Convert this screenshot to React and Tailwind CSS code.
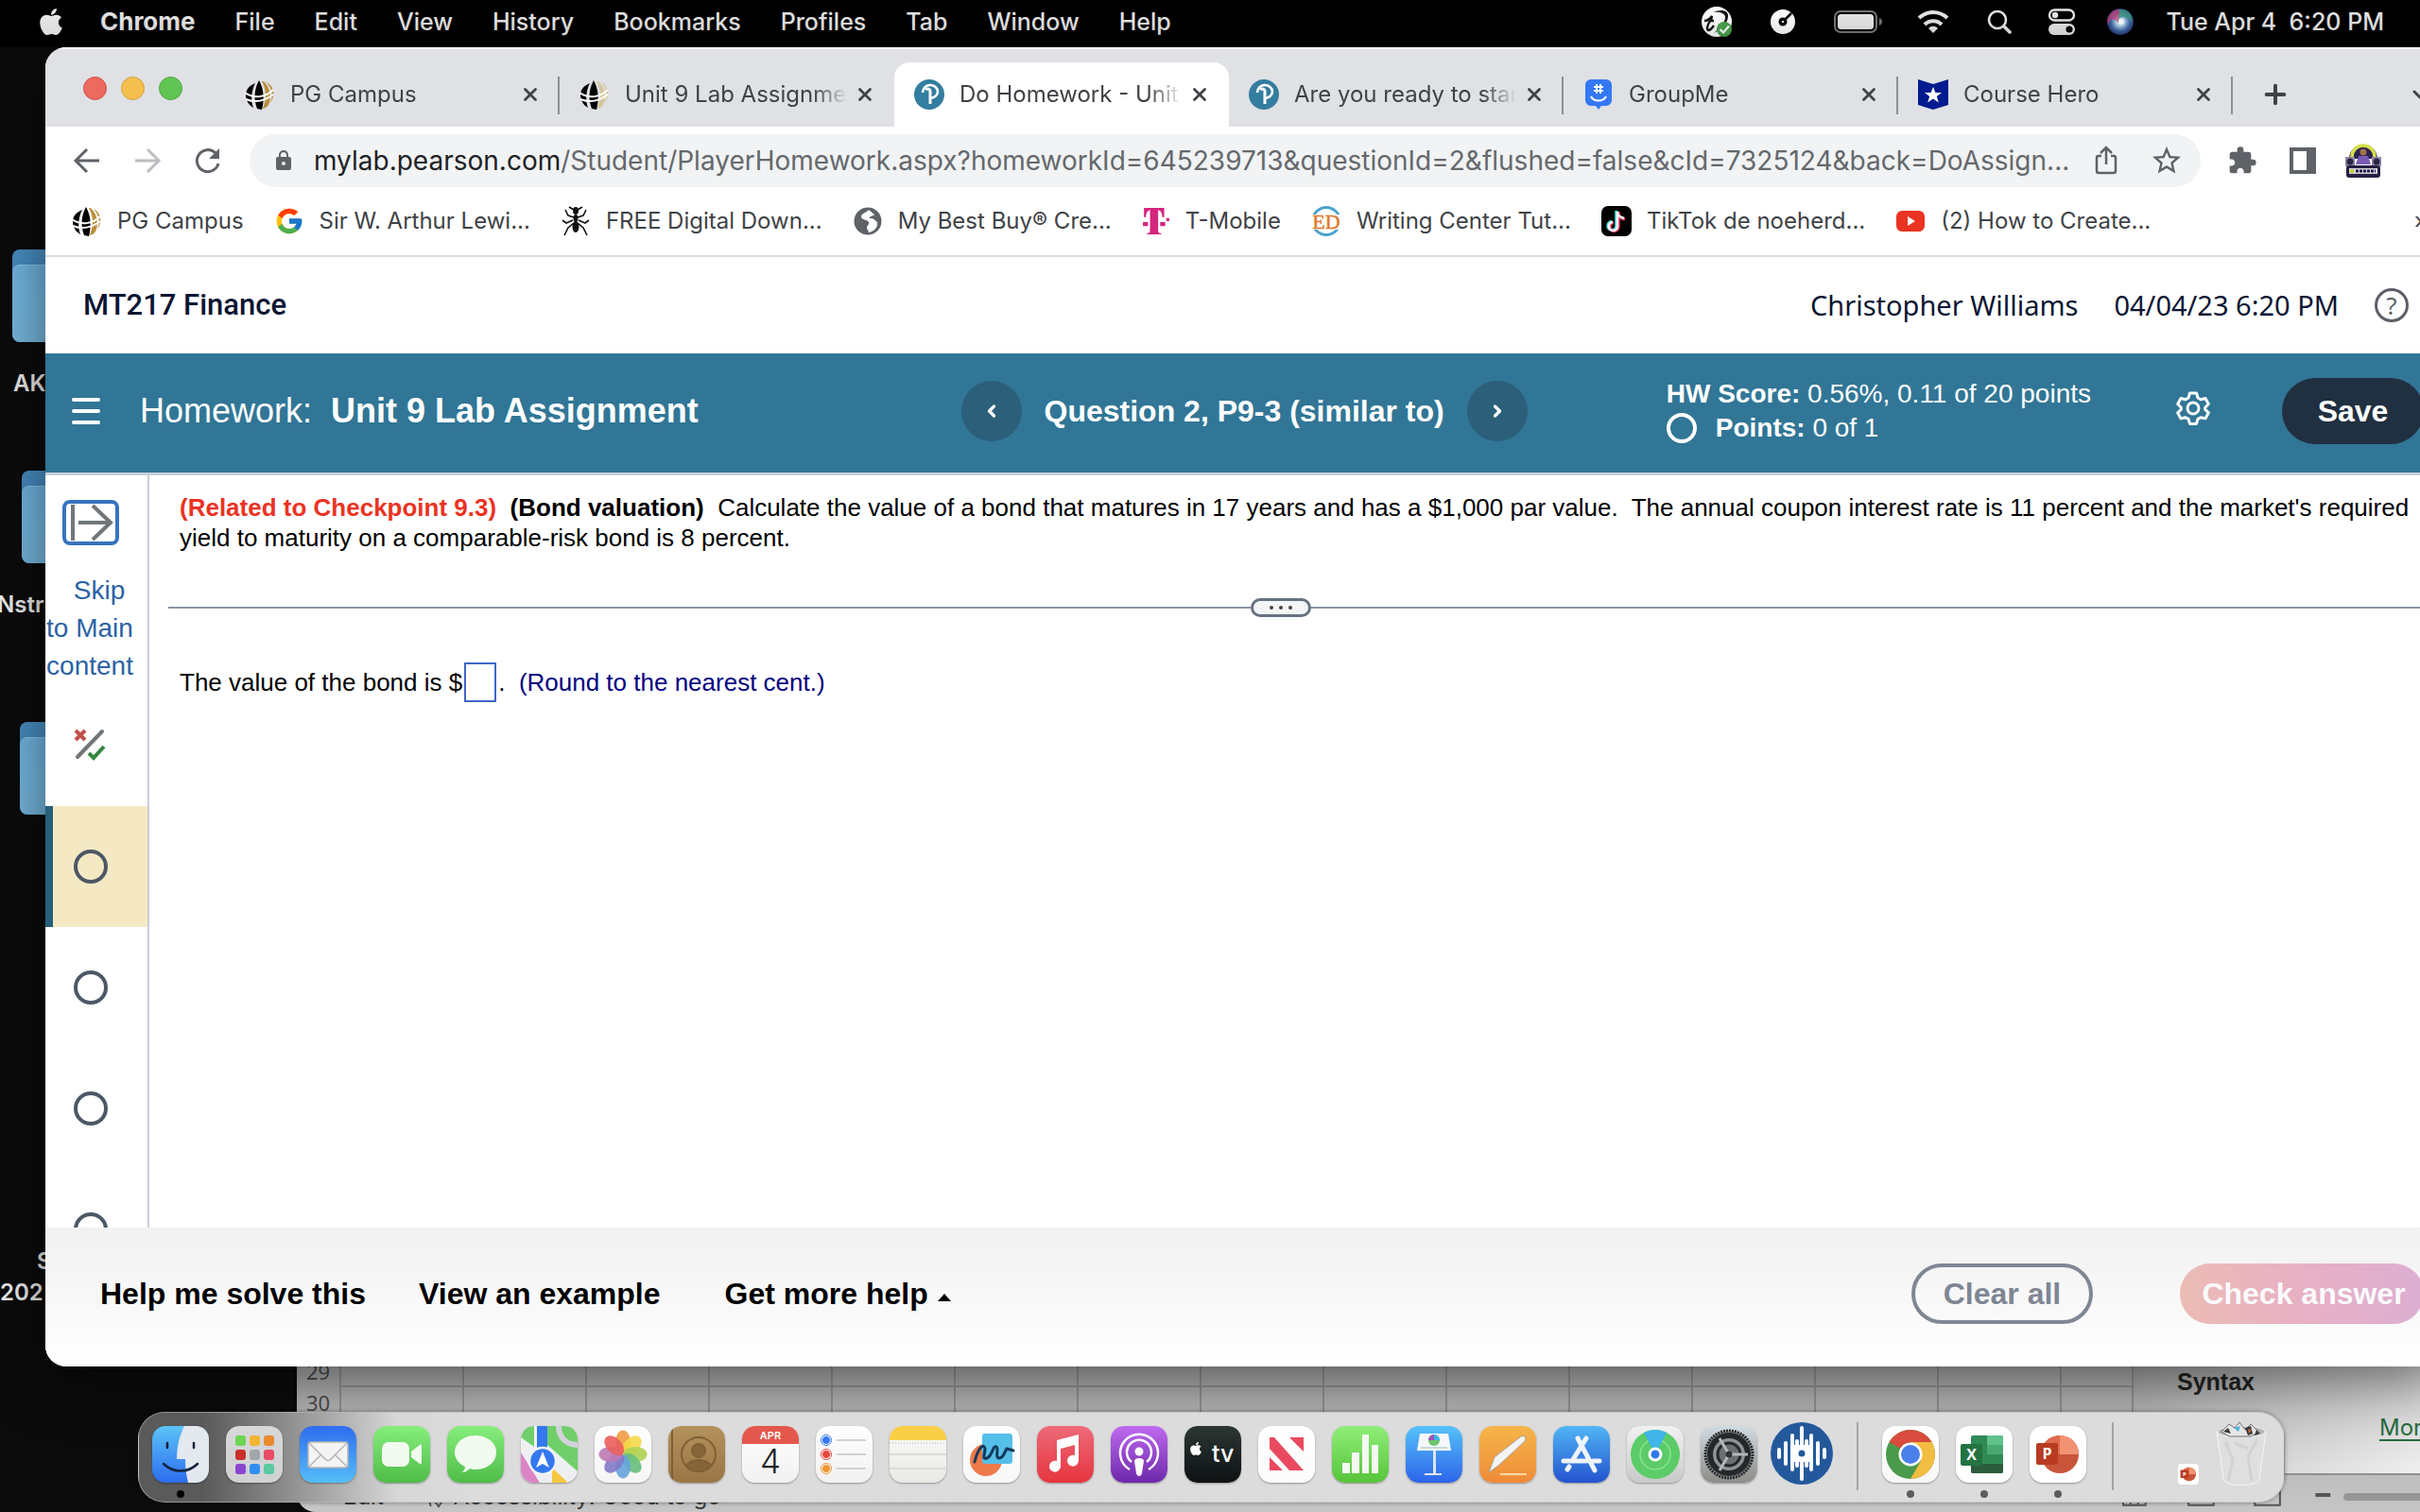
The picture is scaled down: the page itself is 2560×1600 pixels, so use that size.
import { FaApple } from "react-icons/fa";
import { FcGoogle } from "react-icons/fc";
import { MdExtension, MdLock, MdStarOutline } from "react-icons/md";
import { ChevronDown, ChevronLeft, ChevronRight, Plus, X } from "lucide-react";

const MENUS = ["File", "Edit", "View", "History", "Bookmarks", "Profiles", "Tab", "Window", "Help"];

const TABS = [
  { title: "PG Campus", icon: <CampusIcon />, divider: true },
  { title: "Unit 9 Lab Assignment", icon: <CampusIcon faded /> },
  { title: "Do Homework - Unit 9 Lab", icon: <PearsonIcon />, active: true },
  { title: "Are you ready to start", icon: <PearsonIcon />, divider: true },
  { title: "GroupMe", icon: <GroupMeIcon />, divider: true },
  { title: "Course Hero", icon: <CourseHeroIcon />, divider: true },
];

const BOOKMARKS = [
  { title: "PG Campus", icon: <CampusIcon /> },
  { title: "Sir W. Arthur Lewi...", icon: <FcGoogle className="size-8" /> },
  { title: "FREE Digital Down...", icon: <AntIcon /> },
  { title: "My Best Buy® Cre...", icon: <GlobeIcon /> },
  { title: "T-Mobile", icon: <TMobileIcon /> },
  { title: "Writing Center Tut...", icon: <WritingIcon /> },
  { title: "TikTok de noeherd...", icon: <TikTokIcon /> },
  { title: "(2) How to Create...", icon: <YouTubeIcon /> },
];

const FOLDERS = [
  { top: "top-[264px]", left: "left-[13px]" },
  { top: "top-[498px]", left: "left-[23px]" },
  { top: "top-[764px]", left: "left-[21px]" },
];

export default function App() {
  return (
    <div className="relative h-screen overflow-hidden bg-[#0b0b0b] font-['Inter','Liberation_Sans',sans-serif]">
      <DesktopFolders />
      <SpreadsheetWindow />
      <MenuBar />
      <section className="absolute top-[50px] bottom-[154px] left-12 -right-6 flex flex-col overflow-hidden rounded-[22px] bg-white shadow-[0_10px_60px_rgba(0,0,0,0.5)]">
        <TabStrip />
        <Toolbar />
        <BookmarkBar />
        <CourseHeader />
        <HomeworkBar />
        <div className="flex min-h-0 flex-1 border-t-3 border-[#c9cdd9]">
          <QuestionNav />
          <Question />
        </div>
        <ActionBar />
      </section>
      <Dock />
    </div>
  );
}

/* ---------- desktop ---------- */

function DesktopFolders() {
  return (
    <div className="text-[24px] leading-8 font-semibold text-[#e8e8e8]">
      {FOLDERS.map((f) => (
        <div key={f.top} className={`absolute ${f.top} ${f.left} h-[98px] w-28 rounded-lg bg-linear-to-b from-[#4a8fc2] to-[#2a6cae] pt-4`}>
          <div className="h-[82px] rounded-lg border-t border-[#8cc8ea] bg-linear-to-b from-[#6fb4e0] to-[#76b6dd]" />
        </div>
      ))}
      <span className="absolute top-[390px] left-[14px]">AK</span>
      <span className="absolute top-[624px] -left-[3px]">Nstr</span>
      <span className="absolute top-[1319px] left-[39px]">S</span>
      <span className="absolute top-[1352px] left-0">202</span>
    </div>
  );
}

function SpreadsheetWindow() {
  const columns = Array.from({ length: 15 });
  return (
    <section className="absolute right-0 bottom-0 left-[314px] flex h-[166px] flex-col overflow-hidden rounded-bl-[20px] bg-linear-to-b from-[#a4a4a4] to-[#c6c6c6]">
      <div className="flex min-h-0 flex-1">
        <table className="h-[66px] flex-1 table-fixed border-collapse text-[#444]">
          <tbody>
            {[29, 30].map((row) => (
              <tr key={row} className="h-[33px]">
                <th className="w-[46px] border-r-2 border-[#8d8d8d] text-center font-['Open_Sans',sans-serif] text-[22px] leading-7 font-normal">{row}</th>
                {columns.map((_, i) => (
                  <td key={i} className={`border-2 border-t-0 border-[#8d8d8d] ${i < 14 ? "w-[130px]" : ""}`} />
                ))}
              </tr>
            ))}
          </tbody>
        </table>
        <aside className="flex w-[303px] flex-col justify-between overflow-hidden border-b-2 border-[#909090] bg-linear-to-br from-[#9c9c9c] via-[#c4c4c4] to-[#f0f0f0] pt-3 pl-[46px] pb-8">
          <b className="font-['Liberation_Sans',sans-serif] text-[25px] leading-8 text-[#222]">Syntax</b>
          <a href="#more" className="ml-[214px] text-[24px] leading-8 text-[#276a3f] underline underline-offset-4">More</a>
        </aside>
      </div>
      <footer className="flex h-[39px] items-end gap-11 pl-[49px] text-[24px] leading-8 text-[#3c3c3c]">
        <span>Edit</span>
        <span className="flex items-center gap-1.5">
          <svg viewBox="0 0 24 24" className="size-6" fill="none" stroke="#555" strokeWidth="2"><path d="M6 22c-3-4 0-8 2-11M8 14l6 8 8-11" /></svg>
          Accessibility: Good to go
        </span>
        <svg viewBox="0 0 320 39" className="ml-auto h-[39px] w-[316px]" fill="none" stroke="#555" strokeWidth="2">
          <path d="M2 4v28h24V4M10 8v24M18 8v24M72 4v28h27V4M77 28h16M143 4v28h27V4" />
          <path d="M208 21h16" strokeWidth="4" />
          <path d="M242 23h90" stroke="#969696" strokeWidth="8" strokeLinecap="round" />
        </svg>
      </footer>
    </section>
  );
}

function MenuBar() {
  return (
    <header className="absolute inset-x-0 top-0 flex h-[50px] items-center bg-black pb-1 pl-[38px] pr-[38px] text-[25px] leading-8 font-medium text-[#e9e9e9]">
      <FaApple className="size-8 shrink-0" />
      <nav className="ml-9 flex items-center gap-[42px]">
        <button className="text-[26px] font-bold">Chrome</button>
        {MENUS.map((m) => (
          <button key={m}>{m}</button>
        ))}
      </nav>
      <div className="ml-auto flex items-center">
        <svg viewBox="0 0 32 32" className="size-8">
          <circle cx="16" cy="16" r="16" fill="#fff" />
          <path d="M12 6c9-4 17-2 16 5-1 8-9 14-15 17 8-7 12-12 12-17 0-4-6-6-13-5z" fill="#111" />
          <path d="M3 15c3 0 6-2 8-5l-1 5h3M9 15c-3 5-4 9-2 10 2 0 4-2 6-5" fill="none" stroke="#111" strokeWidth="2.4" />
          <circle cx="24" cy="24" r="8" fill="#4aa34f" />
          <path d="M19.500 24l3.500 3.500 6-7" fill="none" stroke="#fff" strokeWidth="2.200" />
        </svg>
        <svg viewBox="0 0 26 26" className="ml-[41px] size-[26px]">
          <circle cx="13" cy="13" r="13" fill="#fff" />
          <circle cx="13" cy="13" r="4.500" fill="#000" />
          <circle cx="13" cy="13" r="1.200" fill="#fff" />
          <path d="M14 12l8-8" stroke="#000" strokeWidth="2.500" />
        </svg>
        <svg viewBox="0 0 52 24" className="ml-[41px] h-6 w-[52px]">
          <rect x="1" y="1" width="44" height="22" rx="6" fill="none" stroke="#777" strokeWidth="2" />
          <rect x="4" y="4" width="38" height="16" rx="3.500" fill="#e9e9e9" />
          <path d="M48 8c4 2 4 6 0 8z" fill="#777" />
        </svg>
        <svg viewBox="0 0 34 26" className="ml-9 h-[26px] w-[34px]" fill="none" stroke="#e9e9e9" strokeWidth="4">
          <path d="M2 9c9-8 21-8 30 0M8 16c5-5 13-5 18 0" />
          <path d="M17 25l-5-5c3-3 7-3 10 0z" fill="#e9e9e9" stroke="none" />
        </svg>
        <svg viewBox="0 0 26 26" className="ml-10 size-[26px]" fill="none" stroke="#e9e9e9" strokeWidth="2.600" strokeLinecap="round">
          <circle cx="11" cy="11" r="9" />
          <path d="M18 18l6 6" strokeWidth="3.600" />
        </svg>
        <svg viewBox="0 0 30 28" className="ml-[38px] h-7 w-[30px]">
          <rect x="2" y="1.500" width="26" height="11" rx="5.500" fill="none" stroke="#e9e9e9" strokeWidth="2.400" />
          <circle cx="8" cy="7" r="3.200" fill="#e9e9e9" />
          <rect x="1" y="16" width="28" height="12" rx="6" fill="#e9e9e9" />
          <circle cx="23" cy="22" r="3.600" fill="#000" />
        </svg>
        <svg viewBox="0 0 28 28" className="ml-[33px] size-7">
          <defs>
            <radialGradient id="siri">
              <stop offset="0" stopColor="#fff" />
              <stop offset=".3" stopColor="#b9d8ee" />
              <stop offset=".7" stopColor="#4169ab" />
              <stop offset="1" stopColor="#2a3a6e" />
            </radialGradient>
          </defs>
          <circle cx="14" cy="14" r="14" fill="url(#siri)" />
          <path d="M12 15C6 9 2 11 1 18-2 8 6 0 14 1z" fill="#cf3f78" opacity=".7" />
          <path d="M13 1c9-1 15 6 13 14-4-6-9-8-14-4z" fill="#3b9a80" opacity=".8" />
          <circle cx="15" cy="14" r="3" fill="#fff" opacity=".9" />
        </svg>
        <time className="ml-[34px] whitespace-pre">Tue Apr 4  6:20 PM</time>
      </div>
    </header>
  );
}

/* ---------- browser chrome ---------- */

function TabStrip() {
  return (
    <div className="flex h-[84px] shrink-0 items-end border-t-2 border-white bg-[#dfe1e5]">
      <div className="flex w-[190px] shrink-0 items-center gap-[15px] self-start pt-[29px] pl-10">
        <span className="size-[25px] rounded-full border border-[#d1524a] bg-[#ec6a5e]" />
        <span className="size-[25px] rounded-full border border-[#d6a13c] bg-[#f4bf4f]" />
        <span className="size-[25px] rounded-full border border-[#51a73e] bg-[#61c554]" />
      </div>
      {TABS.map((t) => (
        <div key={t.title} className={`relative flex h-[68px] w-[354px] shrink-0 items-center pr-4 pl-[21px] ${t.active ? "rounded-t-2xl bg-white" : ""}`}>
          {t.icon}
          <span className="ml-4 min-w-0 flex-1 overflow-hidden mask-r-from-85% text-[24px] leading-8 whitespace-nowrap text-[#3f4246]">{t.title}</span>
          <button aria-label="Close tab" className="ml-1 p-1 text-[#3f4246]">
            <X className="size-[22px]" strokeWidth={3} />
          </button>
          {t.divider ? <span className="absolute top-[15px] right-0 h-10 w-0.5 bg-[#8d9095]" /> : null}
        </div>
      ))}
      <button aria-label="New tab" className="ml-[29px] flex h-[68px] items-center text-[#3f4246]">
        <Plus className="size-8" strokeWidth={3} />
      </button>
      <button aria-label="Search tabs" className="mr-3 ml-auto flex h-[68px] items-center text-[#3f4246]">
        <ChevronDown className="size-6" strokeWidth={3} />
      </button>
    </div>
  );
}

function Toolbar() {
  return (
    <div className="flex h-[72px] shrink-0 items-center text-[#5f6368]">
      <button aria-label="Back" className="ml-7">
        <ArrowIcon />
      </button>
      <button aria-label="Forward" className="ml-8 rotate-180 text-[#bcbec1]">
        <ArrowIcon />
      </button>
      <button aria-label="Reload" className="ml-8">
        <svg viewBox="0 0 32 32" className="size-8" fill="none" stroke="currentColor" strokeWidth="3">
          <path d="M27 19a11.500 11.500 0 1 1-3-11" />
          <path d="M28 3v11H17z" fill="currentColor" stroke="none" />
        </svg>
      </button>
      <div className="ml-7 flex h-14 min-w-0 flex-1 items-center rounded-full bg-[#f1f3f4] pr-[18px] pl-6">
        <MdLock className="size-6 shrink-0" />
        <a href="#address" className="ml-5 min-w-0 flex-1 overflow-hidden text-[28px] leading-9 whitespace-nowrap text-[#65686c]">
          <span className="text-[#202124]">mylab.pearson.com</span>
          /Student/PlayerHomework.aspx?homeworkId=645239713&amp;questionId=2&amp;flushed=false&amp;cId=7325124&amp;back=DoAssign...
        </a>
        <button aria-label="Share" className="mr-8 ml-2">
          <svg viewBox="0 0 28 32" className="h-8 w-7" fill="none" stroke="currentColor" strokeWidth="2.500">
            <path d="M9 11H6a2 2 0 0 0-2 2v14a2 2 0 0 0 2 2h16a2 2 0 0 0 2-2V13a2 2 0 0 0-2-2h-3M14 20V3M8 8l6-6 6 6" />
          </svg>
        </button>
        <button aria-label="Bookmark">
          <MdStarOutline className="size-9" />
        </button>
      </div>
      <button aria-label="Extensions" className="ml-7">
        <MdExtension className="size-8" />
      </button>
      <button aria-label="Side panel" className="ml-[34px]">
        <svg viewBox="0 0 28 28" className="size-7"><path d="M0 0h28v28H0zM4 4v20h14V4z" fill="currentColor" fillRule="evenodd" /></svg>
      </button>
      <button aria-label="Profile" className="mr-[65px] ml-[31px]">
        <svg viewBox="0 0 38 38" className="size-[38px]">
          <path d="M4 17a15 15 0 0 1 30 0z" fill="#2c2350" />
          <path d="M7 15a12 12 0 0 1 24 0" fill="none" stroke="#d6e04a" strokeWidth="3.500" />
          <circle cx="19" cy="10" r="3.500" fill="#a4714f" />
          <path d="M11 23l3-9h10l3 9z" fill="#7a5bb3" />
          <rect y="15" width="10" height="10" fill="#8e87a8" />
          <rect x="28" y="15" width="10" height="10" fill="#8e87a8" />
          <circle cx="5" cy="20" r="3.500" fill="#2a2442" />
          <circle cx="33" cy="20" r="3.500" fill="#2a2442" />
          <rect x="1" y="24" width="36" height="13" rx="3" fill="#261e44" />
          <rect x="4" y="27" width="30" height="6" fill="#d4d2dd" />
          <rect x="5" y="28" width="4" height="4" fill="#c3cf3a" />
          <path d="M11 30h21" stroke="#261e44" strokeWidth="3" strokeDasharray="3 1" />
        </svg>
      </button>
    </div>
  );
}

function BookmarkBar() {
  return (
    <nav className="flex h-[66px] shrink-0 items-center border-b-2 border-[#dcdcdc] pb-2 pl-7 text-[24px] leading-8 text-[#3f4246]">
      {BOOKMARKS.map((b) => (
        <a key={b.title} href="#bookmark" className="mr-8 flex shrink-0 items-center gap-4">
          {b.icon}
          {b.title}
        </a>
      ))}
      <button aria-label="More bookmarks" className="mr-4 ml-auto">»</button>
    </nav>
  );
}

/* ---------- page ---------- */

function CourseHeader() {
  return (
    <header className="flex h-[102px] shrink-0 items-center pr-9 pl-10 font-['Noto_Sans',sans-serif] text-[29px] leading-10 text-[#0b1533]">
      <h1 className="flex-1 font-['Roboto',sans-serif] text-[31px] font-medium">MT217 Finance</h1>
      <span>Christopher Williams</span>
      <time className="ml-[38px]">04/04/23 6:20 PM</time>
      <button aria-label="Help" className="ml-[38px] flex size-9 items-center justify-center rounded-full border-3 border-[#5c5f66] text-[26px] leading-8 text-[#5c5f66]">
        ?
      </button>
    </header>
  );
}

function HomeworkBar() {
  return (
    <div className="flex h-[126px] shrink-0 items-center bg-[#317696] pr-5 pb-1 pl-7 font-['Liberation_Sans',sans-serif] text-white">
      <button aria-label="Menu" className="flex w-[30px] flex-col gap-2">
        <span className="h-1 rounded bg-white" />
        <span className="h-1 rounded bg-white" />
        <span className="h-1 rounded bg-white" />
      </button>
      <h2 className="ml-[42px] flex-1 text-[36px] leading-10 whitespace-nowrap">
        Homework:&nbsp; <b>Unit 9 Lab Assignment</b>
      </h2>
      <div className="flex items-center gap-6">
        <button aria-label="Previous question" className="flex size-16 items-center justify-center rounded-full bg-[#2b5f7a]">
          <ChevronLeft className="size-5" strokeWidth={4} />
        </button>
        <b className="text-[32px] leading-10 whitespace-nowrap">Question 2, P9-3 (similar to)</b>
        <button aria-label="Next question" className="flex size-16 items-center justify-center rounded-full bg-[#2b5f7a]">
          <ChevronRight className="size-5" strokeWidth={4} />
        </button>
      </div>
      <div className="ml-[147px] text-[28px] leading-9 whitespace-nowrap">
        <p><b>HW Score:</b> 0.56%, 0.11 of 20 points</p>
        <p className="flex items-center gap-5">
          <span className="size-8 rounded-full border-4 border-white" />
          <span><b>Points:</b> 0 of 1</span>
        </p>
      </div>
      <button aria-label="Settings" className="mb-1.5 ml-[90px]">
        <svg viewBox="0 0 36 36" className="size-9" fill="none" stroke="#fff" strokeWidth="3" strokeLinejoin="round">
          <path d="M14.500 2h7l1.500 5 3 1.700 5-1.200 3.300 6-3.600 3.700v2l3.600 3.700-3.300 6-5-1.200-3 1.700-1.500 5h-7L13 29.400l-3-1.700-5 1.200-3.300-6 3.600-3.700v-2L1.700 13.500 5 7.500l5 1.200L13 7z" />
          <circle cx="18" cy="18" r="6" />
        </svg>
      </button>
      <button className="ml-[76px] h-[70px] w-[150px] rounded-full bg-[#203040] text-[32px] leading-10 font-bold">Save</button>
    </div>
  );
}

function QuestionNav() {
  return (
    <nav className="flex w-[110px] shrink-0 flex-col overflow-hidden border-r-2 border-[#c9cdd9] font-['Liberation_Sans',sans-serif]">
      <button aria-label="Expand question list" className="mt-[26px] ml-[18px] h-12 w-[60px] shrink-0 rounded-lg border-4 border-[#3573c0]">
        <svg viewBox="0 0 52 40" className="h-10 w-[52px]" fill="none" stroke="#70767a" strokeWidth="4">
          <path d="M7 1v38M13 20h33M28 2l19 18-19 18" />
        </svg>
      </button>
      <a href="#main" className="mt-7 block w-[94px] shrink-0 text-center indent-5 text-[28px] leading-10 text-[#2b62a4]">
        Skip to&nbsp;Main content
      </a>
      <svg viewBox="0 0 34 34" className="mt-[46px] ml-[30px] size-[34px] shrink-0" fill="none" strokeWidth="4">
        <path d="M2 2l10 10M12 2L2 12" stroke="#c14f49" />
        <path d="M30 3L4 30" stroke="#70767a" strokeLinecap="round" />
        <path d="M16 26l5 5 11-12" stroke="#35873f" />
      </svg>
      <div className="mt-12 flex flex-col">
        {[true, false, false, false].map((current, i) => (
          <button
            key={i}
            aria-label={`Question ${i + 2}`}
            className={`flex h-32 items-center border-l-8 pl-[22px] ${current ? "border-[#265f79] bg-[#f5e9c4]" : "border-white"}`}
          >
            <span className="size-9 rounded-full border-4 border-[#4c5866]" />
          </button>
        ))}
      </div>
    </nav>
  );
}

function Question() {
  return (
    <main id="main" className="min-w-0 flex-1 font-['Liberation_Sans',sans-serif] text-[26px] leading-8 text-black">
      <p className="mt-[18px] pr-6 pl-8">
        <b className="text-[#ea3323]">(Related to Checkpoint 9.3)</b>&nbsp; <b>(Bond valuation)</b>&nbsp; Calculate the value of a bond that matures in 17 years and has
        a $1,000 par value.&nbsp; The annual coupon interest rate is 11 percent and the market's required yield to maturity on a comparable-risk bond is 8 percent.
      </p>
      <div className="mt-12 ml-5 flex items-center">
        <span className="h-0.5 w-[1145px] shrink bg-[#8a93a5]" />
        <button aria-label="Resize panes" className="flex h-5 w-16 shrink-0 items-center justify-center gap-1.5 rounded-full border-3 border-[#667180] bg-[#f4f5f7]">
          <span className="size-1 rounded-full bg-[#444]" />
          <span className="size-1 rounded-full bg-[#444]" />
          <span className="size-1 rounded-full bg-[#444]" />
        </button>
        <span className="h-0.5 flex-1 bg-[#8a93a5]" />
      </div>
      <div className="mt-12 flex items-center pl-8">
        <label htmlFor="answer">The value of the bond is $</label>
        <input id="answer" className="mx-0.5 h-[42px] w-[34px] border-2 border-[#3f66c8] bg-white px-1" />
        <span className="whitespace-pre">.  <span className="text-[#00007f]">(Round to the nearest cent.)</span></span>
      </div>
    </main>
  );
}

function ActionBar() {
  return (
    <footer className="flex h-[147px] shrink-0 items-center bg-linear-to-b from-[#f1f1f1] to-white pr-5 pb-2 pl-[58px] font-['Liberation_Sans',sans-serif] text-[32px] leading-10 font-bold text-black">
      <button>Help me solve this</button>
      <button className="ml-14">View an example</button>
      <button className="ml-[68px] flex items-center gap-2.5">
        Get more help
        <svg viewBox="0 0 14 8" className="mt-2 h-2 w-3.5"><path d="M0 8l7-8 7 8z" /></svg>
      </button>
      <button className="ml-auto h-16 w-48 rounded-full border-4 border-[#7f8694] text-[#7f8694]">Clear all</button>
      <button className="ml-[92px] h-16 w-[258px] rounded-full bg-linear-to-r from-[#ecbcb4] via-[#e8b0c4] to-[#dcaed2] pl-1 text-[#fafafc]">
        Check answer
      </button>
    </footer>
  );
}

/* ---------- small icons ---------- */

function ArrowIcon() {
  return (
    <svg viewBox="0 0 32 32" className="size-8" fill="none" stroke="currentColor" strokeWidth="3">
      <path d="M29 16H5M16 4L4 16l12 12" />
    </svg>
  );
}

function CampusIcon({ faded = false }) {
  return (
    <svg viewBox="0 0 32 32" className="size-8 shrink-0">
      <path d="M11 4C4 7 1 11 1 17c0 5 3 10 8 13C6 22 7 12 11 4z" />
      <path d="M15 1c-5 9-6 20-2 30l5 1c3-11 2-22-3-31z" />
      <path d="M18 2c5 9 5 19 1 29 3-1 5-2 6-4 4-8 2-18-5-25zM23 3c6 7 7 14 4 22 5-7 5-17-4-22z" fill={faded ? "#d8c49a" : "#b88f3c"} />
      <path d="M0 14c10 7 22 5 30-3M1 21c10 4 20 2 29-5" fill="none" stroke="#fff" strokeWidth="2" />
    </svg>
  );
}

function PearsonIcon() {
  return (
    <svg viewBox="0 0 32 32" className="size-8 shrink-0">
      <circle cx="16" cy="16" r="16" fill="#337d9f" />
      <path d="M9 14c0-5 4-8 8-8s8 3 8 7-4 7-9 7" fill="none" stroke="#fff" strokeWidth="2.600" />
      <path d="M12 11c2-2 5-1 5 2v13" fill="none" stroke="#fff" strokeWidth="3" />
    </svg>
  );
}

function GroupMeIcon() {
  return (
    <svg viewBox="0 0 32 32" className="size-8 shrink-0" fill="none" stroke="#fff" strokeWidth="2">
      <path d="M8 0h16a6 6 0 0 1 6 6v16a6 6 0 0 1-6 6h-5l-3 4-3-4H8a6 6 0 0 1-6-6V6a6 6 0 0 1 6-6z" fill="#3478f6" stroke="none" />
      <path d="M14 5v10M18 5v10M11 8h10M11 12h10M8 18c3 6 13 6 16 0" />
    </svg>
  );
}

function CourseHeroIcon() {
  return (
    <svg viewBox="0 0 32 32" className="size-8 shrink-0">
      <path d="M0 0l16 5 16-5v27l-16 5-16-5z" fill="#001b8f" />
      <path d="M16 8l2.400 6H25l-5.200 4 2 6.500L16 20.600 10.200 24.500l2-6.500L7 14h6.600z" fill="#fff" />
    </svg>
  );
}

function AntIcon() {
  return (
    <svg viewBox="0 0 32 32" className="size-8" fill="none" stroke="#111" strokeWidth="1.600">
      <path d="M14 4L9 1M18 4l5-3M14 12L8 10 5 4M18 12l6-2 3-6M13 15L6 18l-4-3M19 15l7 3 4-3M14 18l-6 5-4 8M18 18l6 5 4 8" />
      <ellipse cx="16" cy="5" rx="3" ry="4" fill="#111" stroke="none" />
      <ellipse cx="16" cy="13" rx="2.500" ry="4" fill="#111" stroke="none" />
      <ellipse cx="16" cy="22" rx="3.500" ry="6" fill="#111" stroke="none" />
    </svg>
  );
}

function GlobeIcon() {
  return (
    <svg viewBox="0 0 32 32" className="size-8">
      <circle cx="16" cy="16" r="14.500" fill="#5f6368" />
      <path d="M17 4c-2 3-7 3-8 7 0 4 6 3 8 6 1 3-2 3-2 6 0 2 2 3 2 5 6-1 10-6 9-11-3-2-3-4-8-4-2-2 4-2 5-4z" fill="#fff" />
    </svg>
  );
}

function TMobileIcon() {
  return (
    <svg viewBox="2 2 28 28" className="size-[30px]" fill="#d6247f">
      <path d="M4 3h20v9h-2c0-4-1-6-4-7v20c0 2 1 3 3 3v1H7v-1c2 0 3-1 3-3V5c-3 1-4 3-4 7H4zM3 17h5v4H3zM20 17h5v4h-5zM26 13h3v3h-3z" />
    </svg>
  );
}

function WritingIcon() {
  return (
    <svg viewBox="0 0 32 32" className="size-8">
      <circle cx="16" cy="16" r="14.500" fill="none" stroke="#4aa3cc" strokeWidth="3" />
      <rect y="9" width="32" height="16" fill="#fff" />
      <text x="16" y="24" textAnchor="middle" fontFamily="Liberation Serif, serif" fontSize="22" fill="#e07a2c" stroke="#e07a2c" strokeWidth=".5">ED</text>
    </svg>
  );
}

function TikTokIcon() {
  return (
    <svg viewBox="0 0 32 32" className="size-8" fill="none" strokeWidth="3.500">
      <rect width="32" height="32" rx="7" fill="#000" />
      <path d="M16 5v16a4.500 4.500 0 1 1-5-4.500M16 7c1 4 3 5 7 6" stroke="#45e6e0" />
      <path d="M18 6v16a4.500 4.500 0 1 1-5-4.500M18 8c1 4 3 5 7 6" stroke="#f0325a" />
      <path d="M17 6v15.500a4.500 4.500 0 1 1-5-4.500M17 7c1 4 3 5 7 6" stroke="#fff" strokeWidth="2.500" />
    </svg>
  );
}

function YouTubeIcon() {
  return (
    <svg viewBox="0 0 32 32" className="size-8">
      <rect x="1" y="5" width="30" height="22" rx="6" fill="#ea3323" />
      <path d="M13 11l8 5-8 5z" fill="#fff" />
    </svg>
  );
}

/* ---------- dock ---------- */

const DOCK_APPS = [
  { name: "Finder", from: "#5cc3f7", to: "#2c6df0", running: true, art: (
    <>
      <path d="M34 0h14a12 12 0 0 1 12 12v36a12 12 0 0 1-12 12H38c-2-8-3-16-3-25h-9c0-13 3-25 8-35z" fill="#e4e8ef" />
      <path d="M16 18v5M44 18v5M12 40c10 10 26 10 36 0" fill="none" stroke="#14233d" strokeWidth="2.500" strokeLinecap="round" />
    </>
  ) },
  { name: "Launchpad", from: "#d6d8da", to: "#cfd1d3", art: (
    <>
      {["#6cd553", "#f3b431", "#e98a2e", "#c9302a", "#a0a6ab", "#ea4a63", "#8c45cf", "#2f8ff0", "#5ac9a0"].map((c, i) => (
        <rect key={c} x={10 + (i % 3) * 15} y={10 + Math.floor(i / 3) * 15} width="11" height="11" rx="3" fill={c} />
      ))}
    </>
  ) },
  { name: "Mail", from: "#2f6df0", to: "#55bdf8", art: (
    <g fill="#f4f4f4" stroke="#b5b5b5" strokeWidth="1.500">
      <rect x="9" y="17" width="42" height="27" rx="3" />
      <path d="M10 43l14-14M50 43L36 29" />
      <path d="M10 18l17 17c2 2 4 2 6 0l17-17" />
    </g>
  ) },
  { name: "FaceTime", from: "#86ee7c", to: "#4fbc48", art: (
    <g fill="#f1fbef">
      <rect x="9" y="17" width="29" height="26" rx="7" />
      <path d="M40 27l9-7c1-1 2 0 2 1v18c0 1-1 2-2 1l-9-7z" />
    </g>
  ) },
  { name: "Messages", from: "#86ee7c", to: "#4fbc48", art: (
    <path d="M30 10c13 0 22 8 22 18s-9 18-22 18c-2 0-4 0-6-1-2 2-5 4-8 4 2-2 3-4 3-6-7-3-11-9-11-15 0-10 9-18 22-18z" fill="#f1fbef" />
  ) },
  { name: "Maps", from: "#f2f2f4", to: "#eceef2", art: (
    <>
      <path d="M0 28l20 32h-8A12 12 0 0 1 0 48z" fill="#dd84c7" />
      <path d="M28 0h20a12 12 0 0 1 12 12v36L28 20z" fill="#70cf6a" />
      <path d="M0 12C2 4 6 0 14 0v22z" fill="#70cf6a" />
      <path d="M33 60V44l17 16z" fill="#f5c842" />
      <path d="M40 0c0 12 8 20 20 20" fill="none" stroke="#d2d3da" strokeWidth="6" />
      <path d="M17 0h11v28H17z" fill="#3478f0" />
      <circle cx="23" cy="37" r="14" fill="#3478f0" stroke="#f0f2f6" strokeWidth="2.500" />
      <path d="M23 27l7 17-7-4-7 4z" fill="#fff" />
    </>
  ) },
  { name: "Photos", from: "#ffffff", to: "#f5f5f5", art: (
    <g opacity=".92">
      {["#f09433", "#f4d73a", "#a8cf45", "#5cba72", "#5b9ddb", "#7a6fc4", "#b86fb0", "#e9524f"].map((c, i) => (
        <ellipse key={c} cx="30" cy="17" rx="8" ry="12.500" fill={c} opacity=".9" transform={`rotate(${i * 45} 30 30)`} />
      ))}
    </g>
  ) },
  { name: "Contacts", from: "#b4925c", to: "#9a7545", art: (
    <g fill="none" stroke="#7f6035" strokeWidth="2">
      <path d="M4 2v56" />
      <circle cx="32" cy="30" r="18" />
      <circle cx="32" cy="26" r="7" fill="#866638" />
      <path d="M19 42c6-8 20-8 26 0-7 8-19 8-26 0z" fill="#866638" />
    </g>
  ) },
  { name: "Calendar", from: "#ffffff", to: "#f1f1f0", art: (
    <>
      <path d="M0 19v-7A12 12 0 0 1 12 0h36a12 12 0 0 1 12 12v7z" fill="#e4574c" />
      <text x="30" y="14" textAnchor="middle" fontFamily="Inter, sans-serif" fontSize="11" fontWeight="600" fill="#fff">APR</text>
      <text x="30" y="50" textAnchor="middle" fontFamily="Inter, sans-serif" fontSize="35" fontWeight="300" fill="#222">4</text>
    </>
  ) },
  { name: "Reminders", from: "#ffffff", to: "#f1f1f0", art: (
    <>
      {["#3478f0", "#e5473f", "#ef9432"].map((c, i) => (
        <g key={c}>
          <circle cx="11" cy={15 + i * 15} r="4.500" fill={c} stroke="#fff" />
          <circle cx="11" cy={15 + i * 15} r="5.500" fill="none" stroke={c} />
          <path d={`M22 ${15 + i * 15}h31`} stroke="#c4c4c4" strokeWidth="1.500" />
        </g>
      ))}
    </>
  ) },
  { name: "Notes", from: "#fbfbfa", to: "#e9e8e3", art: (
    <>
      <path d="M0 15v-3A12 12 0 0 1 12 0h36a12 12 0 0 1 12 12v3z" fill="#f9cf47" />
      <path d="M0 18h60" stroke="#aaa" strokeDasharray="1 2" />
      <path d="M0 30h60M0 45h60" stroke="#d4d4d2" strokeWidth="1.500" />
    </>
  ) },
  { name: "Freeform", from: "#ffffff", to: "#f7f7f7", art: (
    <>
      <circle cx="24" cy="36" r="17" fill="#ee7a4a" />
      <rect x="20" y="8" width="32" height="32" rx="3" fill="#55bfe8" />
      <path d="M12 38c4-16 10-20 11-14 0 6-4 12 2 10s6-14 10-12c3 2-2 12 3 12s5-6 8-10l7 2" fill="none" stroke="#123a5c" strokeWidth="3" strokeLinecap="round" />
    </>
  ) },
  { name: "Music", from: "#ee6a79", to: "#e6353e", art: (
    <path d="M21 15l23-6v28a6 6 0 1 1-4-6V20l-15 4v19a6 6 0 1 1-4-6z" fill="#fff" />
  ) },
  { name: "Podcasts", from: "#bf6af0", to: "#6d28ab", art: (
    <g fill="none" stroke="#fff" strokeWidth="2.500">
      <path d="M20 46a20 20 0 1 1 20 0M22 38a13 13 0 1 1 16 0" />
      <circle cx="30" cy="27" r="4.500" fill="#fff" stroke="none" />
      <path d="M25 37c0-4 10-4 10 0l-2 13c-1 4-5 4-6 0z" fill="#fff" stroke="none" />
    </g>
  ) },
  { name: "TV", from: "#2b3634", to: "#0e1213", art: (
    <>
      <FaApple x="4" y="16" width="25" height="25" color="#fff" />
      <text x="29" y="38" fontFamily="Inter, sans-serif" fontSize="25" fontWeight="500" fill="#fff">tv</text>
    </>
  ) },
  { name: "News", from: "#ffffff", to: "#fbfbfb", art: (
    <path d="M12 12h5l31 35H33L12 24zM33 12h15v15zM12 33v14h14z" fill="#ea4a60" />
  ) },
  { name: "Numbers", from: "#8fee78", to: "#57c43a", art: (
    <path d="M11 39h8v11h-8zM21 28h8v22h-8zM32 9h7v41h-7zM42 20h7v30h-7z" fill="#f4f8f3" />
  ) },
  { name: "Keynote", from: "#56c2fa", to: "#2c64ea", art: (
    <>
      <path d="M29 26h3v24h6v2H20v-2h9z" fill="#dfe5ec" />
      <path d="M15 8h30l3 18H12z" fill="#f6f7f9" />
      <circle cx="30" cy="15" r="6" fill="#6cc46a" />
      <path d="M30 9a6 6 0 0 0-6 6h6z" fill="#a24fb5" />
      <path d="M30 9a6 6 0 0 1 6 6h-6z" fill="#3cb4e6" />
      <path d="M16 23h28" stroke="#9bb" strokeWidth="1" />
    </>
  ) },
  { name: "Pages", from: "#f5b549", to: "#ef8b38", art: (
    <>
      <path d="M10 49l6-16 28-22c4-1 6 1 4 5L20 42z" fill="#f4f4f4" stroke="#999" strokeWidth=".8" />
      <path d="M22 51h28" stroke="#f9d9a8" strokeWidth="2" />
    </>
  ) },
  { name: "App Store", from: "#50b5f5", to: "#2353cf", art: (
    <path d="M35 13L20 37M26 13l18 34M11 37h24M42 37h7M17 43l-2 3" stroke="#eef4fb" strokeWidth="5" strokeLinecap="round" fill="none" />
  ) },
  { name: "Find My", from: "#f2f2f2", to: "#c9c9c9", art: (
    <>
      <circle cx="30" cy="30" r="26" fill="#5bcc68" />
      <circle cx="30" cy="30" r="16" fill="none" stroke="#8be392" strokeWidth="1.500" />
      <path d="M30 30L18 7c8-4 16-4 24 0z" fill="#3fb5e8" />
      <circle cx="30" cy="30" r="6" fill="#2f78ea" stroke="#fff" strokeWidth="3" />
    </>
  ) },
  { name: "System Settings", from: "#d0dbe1", to: "#8d8c88", art: (
    <g fill="none" stroke="#25282a">
      <circle cx="30" cy="30" r="25" fill="#8f9294" strokeWidth="3" strokeDasharray="2 1" />
      <circle cx="30" cy="30" r="20" strokeWidth="6" />
      <circle cx="30" cy="30" r="12" fill="#6b6e70" strokeWidth="3" />
      <path d="M30 30h20M30 30L20 13M30 30L20 47" stroke="#b4b7b9" strokeWidth="3" />
      <circle cx="30" cy="30" r="3" fill="#333" />
    </g>
  ) },
];

const OFFICE_APPS = [
  { name: "Chrome", from: "#ffffff", to: "#f7f7f7", running: true, art: (
    <>
      <circle cx="30" cy="30" r="26" fill="#4a9a4c" />
      <path d="M30 30L7.500 17A26 26 0 0 1 52.500 17z" fill="#d94b3d" />
      <path d="M30 17h22.500A26 26 0 0 1 30 56l11-19z" fill="#f3bd42" />
      <circle cx="30" cy="30" r="12.500" fill="#fff" />
      <circle cx="30" cy="30" r="10" fill="#4a80ea" />
    </>
  ) },
  { name: "Excel", from: "#ffffff", to: "#ffffff", running: true, art: (
    <>
      <rect x="16" y="10" width="34" height="40" rx="2" fill="#2f8a55" />
      <path d="M33 10h15a2 2 0 0 1 2 2v8H33z" fill="#61c28b" />
      <path d="M33 20h17v10H33z" fill="#4aa873" />
      <path d="M16 40h34v8a2 2 0 0 1-2 2H18a2 2 0 0 1-2-2z" fill="#2b5d3d" />
      <rect x="5" y="19" width="23" height="23" rx="2" fill="#237341" />
      <text x="16.500" y="36" textAnchor="middle" fontFamily="Open Sans, sans-serif" fontSize="16" fontWeight="700" fill="#fff">X</text>
    </>
  ) },
  { name: "PowerPoint", from: "#ffffff", to: "#ffffff", running: true, art: <PowerPointArt /> },
];

function PowerPointArt() {
  return (
    <>
      <circle cx="32" cy="30" r="20" fill="#c8553a" />
      <path d="M32 30V10a20 20 0 0 1 20 20z" fill="#f19372" />
      <path d="M32 30V10a20 20 0 0 0-20 20z" fill="#dd6b4c" />
      <rect x="7" y="18" width="23" height="23" rx="2" fill="#b83b20" />
      <text x="18.500" y="35" textAnchor="middle" fontFamily="Open Sans, sans-serif" fontSize="16" fontWeight="700" fill="#fff">P</text>
    </>
  );
}

function DockIcon({ app }) {
  const gradient = `dock-${app.name.replace(" ", "-")}`;
  return (
    <button aria-label={app.name} className="flex shrink-0 flex-col items-center">
      <svg viewBox="0 0 60 60" className="size-[60px] rounded-[14px] shadow-[0_1px_2px_rgba(0,0,0,0.35)]">
        <defs>
          <linearGradient id={gradient} x2="0" y2="1">
            <stop stopColor={app.from} />
            <stop offset="1" stopColor={app.to} />
          </linearGradient>
        </defs>
        <rect width="60" height="60" rx="13" fill={`url(#${gradient})`} />
        {app.art}
      </svg>
      <span className={`mt-2 size-2 rounded-full ${app.running ? (app.name === "Finder" ? "bg-black" : "bg-[#5c5c5c]") : ""}`} />
    </button>
  );
}

function Dock() {
  return (
    <nav className="absolute bottom-2.5 left-[146px] flex h-24 items-start gap-[18px] rounded-[28px] border border-[#b9b9b9]/60 bg-linear-to-r from-[#5a5a5a] from-3% via-[#d6d7d6] via-12% to-[#dcdcdc] to-16% pt-3.5 pr-[18px] pl-3.5 shadow-[0_0_4px_rgba(0,0,0,0.4)]">
      {DOCK_APPS.map((app) => (
        <DockIcon key={app.name} app={app} />
      ))}
      <button aria-label="Recorder" className="-mt-1 -ml-1 shrink-0">
        <svg viewBox="0 0 66 66" className="size-[66px]">
          <circle cx="33" cy="33" r="33" fill="#23599c" />
          <path d="M9 29v8M16 22v22M23 14v36M28 20v26M33 6v54M38 20v26M43 14v36M50 22v22M57 29v8" stroke="#fff" strokeWidth="4" strokeLinecap="round" />
          <path d="M23 24h20v18H23z" fill="#fff" />
          <circle cx="33" cy="33" r="3.500" fill="#23599c" />
        </svg>
      </button>
      <span className="mx-[7px] -mt-1 h-[72px] w-0.5 bg-[#a4a4a4]" />
      {OFFICE_APPS.map((app) => (
        <DockIcon key={app.name} app={app} />
      ))}
      <span className="mr-2 ml-[9px] -mt-1 h-[72px] w-0.5 bg-[#a4a4a4]" />
      <button aria-label="Minimized presentation" className="mt-10 ml-[42px]">
        <svg viewBox="0 0 60 60" className="size-[22px] rounded bg-white">
          <PowerPointArt />
        </svg>
      </button>
      <button aria-label="Trash" className="-mt-1.5">
        <svg viewBox="0 0 54 70" className="h-[70px] w-[54px]">
          <path d="M1 12l7 50c2 9 36 9 38 0l7-50c-8 7-44 7-52 0z" fill="#dfdfdf" stroke="#f6f6f6" />
          <path d="M10 22l8 20-5 22M44 20l-10 18 4 26M20 24l14 6" fill="none" stroke="#d2d2d2" strokeWidth="3" />
          <ellipse cx="27" cy="12" rx="25" ry="6" fill="#b5b5b5" stroke="#f1f1f1" />
          <path d="M6 12l8-8 6 4 5-6 6 8 6-6 8 8-8 5H14z" fill="#e6e6e6" stroke="#555" strokeWidth=".8" />
          <path d="M8 12l5-4 3 6zM31 8l6-2 2 8-5 2zM43 10l4 4-6 2z" fill="#3a3a3a" />
          <path d="M19 8l7-2-2 6z" fill="#4ab3d9" />
          <path d="M34 9l4 1-3 4z" fill="#c96a3a" />
        </svg>
      </button>
    </nav>
  );
}
